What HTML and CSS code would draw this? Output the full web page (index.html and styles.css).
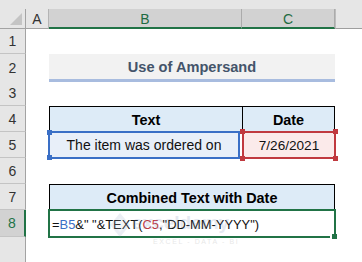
FILE: index.html
```html
<!DOCTYPE html>
<html>
<head>
<meta charset="utf-8">
<link rel="stylesheet" href="styles.css">
</head>
<body>
<div class="sheet">
  <div class="band"></div>
  <div class="row hdr">
    <div class="corner"><svg width="26" height="19" viewBox="0 0 26 19"><polygon points="22,4 22,16 10,16" fill="#c4c4c4"/></svg></div>
    <div class="ch">A</div>
    <div class="ch sel">B</div>
    <div class="ch sel">C</div>
    <div class="ch rest"></div>
  </div>
  <div class="row r1"><div class="rh">1</div></div>
  <div class="row"><div class="rh">2</div><div class="title">Use of Ampersand</div></div>
  <div class="row"><div class="rh">3</div></div>
  <div class="row"><div class="rh">4</div><div class="th th-b">Text</div><div class="th th-c">Date</div></div>
  <div class="row">
    <div class="rh">5</div>
    <div class="cell sel-b">The item was ordered on<span class="h hb tl"></span><span class="h hb bl"></span></div>
    <div class="cell sel-c">7/26/2021<span class="h hr tl"></span><span class="h hr bl"></span><span class="h hr tr"></span><span class="h hr br"></span></div>
  </div>
  <div class="row"><div class="rh">6</div></div>
  <div class="row"><div class="rh">7</div><div class="th wide">Combined Text with Date</div></div>
  <div class="row r8">
    <div class="rh act">8</div>
    <div class="active">=<span class="ref-b">B5</span>&amp;" "&amp;TEXT(<span class="ref-c">C5</span>,"DD-MM-YYYY")<span class="fill"></span></div>
  </div>
  <div class="row"><div class="rh"></div></div>
  <div class="wm">
    <svg class="wm-logo" width="20" height="24" viewBox="0 0 20 24"><polygon points="10,0 20,12 10,24 0,12" fill="#9fb0cc"/><polygon points="10,5 16,12 10,19 4,12" fill="#c3cfe0"/></svg>
    <div class="wm-text">
      <div class="wm-name">exceldemy</div>
      <div class="wm-sub">EXCEL - DATA - BI</div>
    </div>
  </div>
</div>
</body>
</html>
```

FILE: styles.css
```css
* { box-sizing: border-box; }
html, body { margin: 0; padding: 0; background: #fff; }
body { font-family: "Liberation Sans", Arial, sans-serif; font-size: 14px; color: #000; }

.sheet { position: relative; width: 362px; height: 262px; overflow: hidden; background: #fff; }

.band { height: 9px; background: #e6e6e6; }

.row {
  display: grid;
  grid-template-columns: 26px 23px 193px 93px 27px;
  height: 26px;
}
.row.hdr { height: 20px; }
.row.r1 { height: 25px; }
.row.r8 { height: 27px; }

.corner {
  grid-column: 1;
  background: #e6e6e6;
  border-right: 1px solid #a3a3a3;
  border-bottom: 1px solid #a3a3a3;
}
.corner svg { display: block; }

.ch {
  background: #e6e6e6;
  border-right: 1px solid #b4b4b4;
  border-bottom: 1px solid #a3a3a3;
  display: flex;
  align-items: center;
  justify-content: center;
  color: #333;
  font-size: 14px;
  padding-top: 1px;
}
.ch.sel {
  background: #d2d2d2;
  color: #1f6b41;
  border-right: 1px solid #ababab;
  border-bottom: 2px solid #217346;
}
.ch.rest {
  background: #e6e6e6;
  border-left: 1px solid #bdbdbd;
  border-right: none;
  border-bottom: 1px solid #9e9e9e;
}

.rh {
  grid-column: 1;
  background: #e6e6e6;
  border-right: 1px solid #a3a3a3;
  border-bottom: 1px solid #c4c4c4;
  display: flex;
  align-items: center;
  justify-content: center;
  color: #333;
  font-size: 14px;
}
.rh.act {
  background: #d2d2d2;
  color: #217346;
  border-right: 2px solid #217346;
}

.title {
  grid-column: 3 / 5;
  height: 28px;
  background: #f2f2f2;
  border-bottom: 3px solid #a8bcdf;
  display: flex;
  align-items: center;
  justify-content: center;
  font-weight: bold;
  font-size: 14.6px;
  color: #44546a;
}

.th {
  background: #ddebf7;
  border-top: 1px solid #000;
  border-left: 1px solid #000;
  display: flex;
  align-items: center;
  justify-content: center;
  font-weight: bold;
  font-size: 14.4px;
  padding-top: 1px;
}
.th-b { grid-column: 3; }
.th-c { grid-column: 4; border-right: 1px solid #000; }
.th.wide { grid-column: 3 / 5; border-right: 1px solid #000; }

.cell {
  position: relative;
  display: flex;
  align-items: center;
  justify-content: center;
  font-size: 14px;
  color: #111;
}
.sel-b {
  grid-column: 3;
  margin: -1px 2px -1px -1px;
  border: 2px solid #3a6fc6;
  background: #e8eff9;
}
.sel-c {
  grid-column: 4;
  margin: -1px -1px -1px 0;
  border: 2px solid #c0393f;
  background: #fbeaea;
  font-size: 13.6px;
}

.h { position: absolute; width: 5px; height: 5px; }
.hb { background: #3a6fc6; }
.hr { background: #c0393f; }
.hb.tl { left: -3px; top: -3px; }
.hb.bl { left: -3px; bottom: -3px; }
.hr.tl { left: -4px; top: -4px; }
.hr.bl { left: -4px; bottom: -4px; }
.hr.tr { right: -4px; top: -4px; }
.hr.br { right: -4px; bottom: -4px; }

.active {
  grid-column: 3 / 5;
  position: relative;
  margin: -1px -1px -1px -1px;
  border: 2px solid #217346;
  display: flex;
  align-items: center;
  padding-left: 2px;
  padding-top: 1px;
  font-size: 12.9px;
  color: #111;
  white-space: nowrap;
}
.ref-b { color: #3a6fc6; }
.ref-c { color: #c0393f; }
.fill {
  position: absolute;
  right: -3px;
  bottom: -3px;
  width: 7px;
  height: 5px;
  background: #217346;
  border-left: 2px solid #fff;
}

.wm {
  position: absolute;
  left: 110px;
  top: 212px;
  display: flex;
  align-items: flex-start;
  gap: 2px;
  opacity: 0.2;
  pointer-events: none;
}
.wm-logo { display: block; margin-top: 1px; }
.wm-text { display: flex; flex-direction: column; align-items: flex-start; }
.wm-name { font-weight: bold; font-size: 19px; color: #7f95bb; line-height: 21px; }
.wm-sub { font-size: 7px; letter-spacing: 1.6px; color: #8a8a8a; line-height: 8px; margin-top: 5px; margin-left: 21px; }
```
